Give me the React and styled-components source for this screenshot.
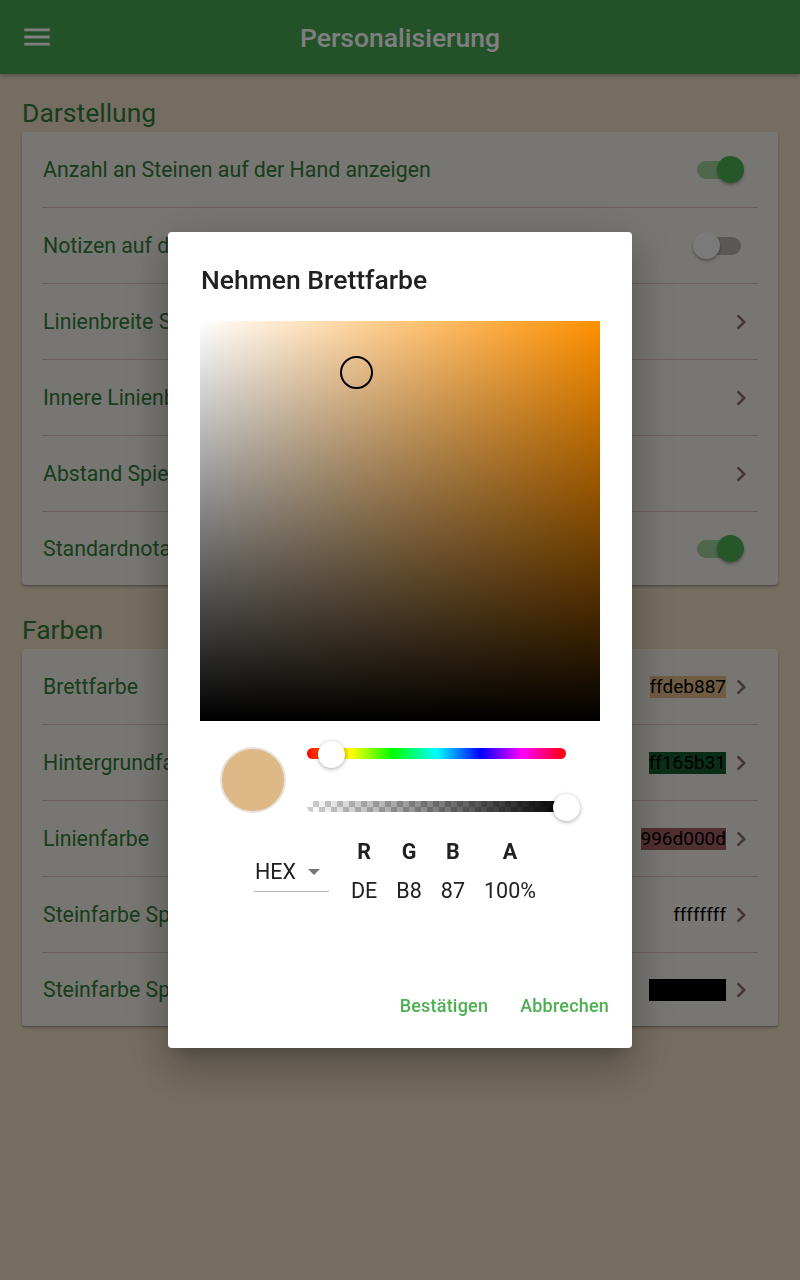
import styled, { createGlobalStyle } from "styled-components";

const GlobalStyle = createGlobalStyle`
  html, body {
    margin: 0;
    padding: 0;
    background: #ecdac2;
    font-family: Roboto, "Liberation Sans", sans-serif;
  }
  * { box-sizing: border-box; }
`;

const Page = styled.div`
  min-height: 1280px;
  background: #ecdac2;
`;

const AppBar = styled.header`
  height: 74px;
  background: #46a250;
  display: flex;
  align-items: center;
  position: relative;
  box-shadow: 0 2px 4px rgba(0, 0, 0, 0.25);
  padding: 0 20px;
`;

const MenuButton = styled.svg`
  width: 34px;
  height: 34px;
  fill: #ffffff;
`;

const AppTitle = styled.h1`
  flex: 1;
  margin: 0 34px 0 0;
  text-align: center;
  font-size: 26.5px;
  font-weight: 500;
  color: #ffffff;
`;

const Content = styled.main`
  padding: 21px 22px 0;
  display: flex;
  flex-direction: column;
  gap: 27px;
`;

const Section = styled.section`
  display: flex;
  flex-direction: column;
  gap: 1px;
`;

const SectionTitle = styled.h2`
  margin: 0;
  height: 36px;
  line-height: 36px;
  font-size: 26.5px;
  font-weight: 400;
  color: #2f7a3a;
`;

const Card = styled.div`
  background: #eeece4;
  border-radius: 4px;
  box-shadow: 0 2px 3px rgba(0, 0, 0, 0.22), 0 1px 1px rgba(0, 0, 0, 0.12);
  padding: 0 20px;
`;

const Row = styled.div`
  height: 76px;
  display: flex;
  align-items: center;
  justify-content: space-between;
  border-bottom: 1px solid #d6bfbd;
  &:last-child { border-bottom: none; height: 73px; }
`;

const RowLabel = styled.span`
  font-size: 21.3px;
  color: #2f7a3a;
  margin-left: 1px;
`;

const Toggle = styled.span`
  position: relative;
  width: 44px;
  height: 18px;
  margin-right: 17px;
  border-radius: 9px;
  background: ${(p) => (p.$on ? "rgba(76, 175, 80, 0.5)" : "#b4b0aa")};
`;

const Thumb = styled.span`
  position: absolute;
  top: -4.5px;
  left: ${(p) => (p.$on ? "20px" : "-4px")};
  width: 27px;
  height: 27px;
  border-radius: 50%;
  background: ${(p) => (p.$on ? "#4caf50" : "#f4f4f4")};
  box-shadow: 0 2px 3px rgba(0, 0, 0, 0.3);
`;

const Trailing = styled.div`
  display: flex;
  align-items: center;
`;

const HexChip = styled.span`
  height: 22px;
  line-height: 22px;
  font-size: 19px;
  color: #000;
  background: ${(p) => p.$bg};
`;

const Chevron = styled.svg`
  width: 30px;
  height: 30px;
  margin-right: 2px;
  fill: #8c6b6b;
`;

const Overlay = styled.div`
  position: fixed;
  inset: 0;
  background: rgba(0, 0, 0, 0.5);
  display: flex;
  align-items: center;
  justify-content: center;
`;

const Dialog = styled.div`
  width: 464px;
  height: 816px;
  background: #fff;
  border-radius: 4px;
  padding: 32px 15px 0 32px;
  display: flex;
  flex-direction: column;
  box-shadow: 0 24px 38px 3px rgba(0, 0, 0, 0.14), 0 9px 46px 8px rgba(0, 0, 0, 0.12),
    0 11px 15px -7px rgba(0, 0, 0, 0.2);
`;

const DialogTitle = styled.h3`
  margin: 0 0 25px 1px;
  font-size: 26.5px;
  line-height: 32px;
  font-weight: 500;
  color: #212121;
`;

const Saturation = styled.div`
  position: relative;
  width: 400px;
  height: 400px;
  background: linear-gradient(to top, #000, rgba(0, 0, 0, 0)),
    linear-gradient(to right, #fff, rgba(255, 255, 255, 0)), #ff9000;
`;

const Pointer = styled.span`
  position: absolute;
  left: 140px;
  top: 35px;
  width: 33px;
  height: 33px;
  border: 2px solid #000;
  border-radius: 50%;
`;

const Controls = styled.div`
  display: flex;
  align-items: flex-start;
  gap: 21px;
  padding: 26px 0 0 20px;
  width: 400px;
`;

const Preview = styled.span`
  width: 66px;
  height: 66px;
  border-radius: 50%;
  background: #deb887;
  border: 2px solid #e6e2dc;
  flex-shrink: 0;
`;

const Sliders = styled.div`
  width: 259px;
  margin-top: 1px;
  display: flex;
  flex-direction: column;
  gap: 42px;
`;

const Track = styled.div`
  position: relative;
  height: 11px;
  border-radius: 6px;
  background: ${(p) => p.$bg};
`;

const Knob = styled.span`
  position: absolute;
  top: 50%;
  left: ${(p) => p.$pos};
  width: 27px;
  height: 27px;
  margin: -13px 0 0 -13px;
  border-radius: 50%;
  background: #fff;
  box-shadow: 0 1px 4px rgba(0, 0, 0, 0.35);
`;

const Fields = styled.div`
  display: flex;
  align-items: flex-start;
  padding: 26px 0 0 54px;
`;

const ModeSelect = styled.div`
  width: 75px;
  height: 40px;
  margin-top: 13px;
  margin-right: 22px;
  border-bottom: 1px solid #b8b8b8;
  display: flex;
  align-items: center;
  justify-content: space-between;
  padding: 0 9px 0 1px;
  font-size: 21.5px;
  color: #212121;
`;

const Caret = styled.span`
  width: 0;
  height: 0;
  border-left: 6px solid transparent;
  border-right: 6px solid transparent;
  border-top: 6px solid #757575;
`;

const ChannelList = styled.div`
  display: flex;
  gap: 19px;
`;

const Channel = styled.div`
  display: flex;
  flex-direction: column;
  align-items: center;
  gap: 14px;
  font-size: 21.5px;
  line-height: 25px;
  color: #212121;
`;

const ChannelLabel = styled.span`
  font-weight: 700;
`;

const Actions = styled.div`
  margin-top: auto;
  display: flex;
  justify-content: flex-end;
  gap: 16px;
  padding-bottom: 24px;
`;

const ActionButton = styled.button`
  border: none;
  background: none;
  padding: 8px;
  font-family: inherit;
  font-size: 18px;
  font-weight: 500;
  color: #4caf50;
  letter-spacing: 0.2px;
`;

const chevronPath = "M10 6 8.59 7.41 13.17 12l-4.58 4.59L10 18l6-6z";

function ChevronIcon() {
  return (
    <Chevron viewBox="0 0 24 24">
      <path d={chevronPath} />
    </Chevron>
  );
}

const display = [
  { label: "Anzahl an Steinen auf der Hand anzeigen", type: "toggle", on: true },
  { label: "Notizen auf dem Spielbrett anzeigen", type: "toggle", on: false },
  { label: "Linienbreite Spielbrett", type: "nav" },
  { label: "Innere Linienbreite Spielbrett", type: "nav" },
  { label: "Abstand Spielbrett", type: "nav" },
  { label: "Standardnotation verwenden", type: "toggle", on: true },
];

const colors = [
  { label: "Brettfarbe", hex: "ffdeb887", bg: "#deb887" },
  { label: "Hintergrundfarbe", hex: "ff165b31", bg: "#165b31" },
  { label: "Linienfarbe", hex: "996d000d", bg: "rgba(109, 0, 13, 0.6)" },
  { label: "Steinfarbe Spieler 1", hex: "ffffffff", bg: "rgba(255, 255, 255, 0.15)" },
  { label: "Steinfarbe Spieler 2", hex: "ff000000", bg: "#000000" },
];

const hueGradient =
  "linear-gradient(to right, #f00 0%, #ff0 17%, #0f0 33%, #0ff 50%, #00f 67%, #f0f 83%, #f00 100%)";
const alphaGradient =
  "linear-gradient(to right, rgba(0,0,0,0), #000), repeating-conic-gradient(#cfcfcf 0% 25%, #ffffff 0% 50%) 0 0 / 12px 12px";

export default function App() {
  return (
    <Page>
      <GlobalStyle />
      <AppBar>
        <MenuButton viewBox="0 0 24 24">
          <path d="M3 18h18v-2H3v2zm0-5h18v-2H3v2zm0-7v2h18V6H3z" />
        </MenuButton>
        <AppTitle>Personalisierung</AppTitle>
      </AppBar>
      <Content>
        <Section>
          <SectionTitle>Darstellung</SectionTitle>
          <Card>
            {display.map((item) => (
              <Row key={item.label}>
                <RowLabel>{item.label}</RowLabel>
                {item.type === "toggle" ? (
                  <Toggle $on={item.on}>
                    <Thumb $on={item.on} />
                  </Toggle>
                ) : (
                  <ChevronIcon />
                )}
              </Row>
            ))}
          </Card>
        </Section>
        <Section>
          <SectionTitle>Farben</SectionTitle>
          <Card>
            {colors.map((item) => (
              <Row key={item.label}>
                <RowLabel>{item.label}</RowLabel>
                <Trailing>
                  <HexChip $bg={item.bg}>{item.hex}</HexChip>
                  <ChevronIcon />
                </Trailing>
              </Row>
            ))}
          </Card>
        </Section>
      </Content>

      <Overlay>
        <Dialog>
          <DialogTitle>Nehmen Brettfarbe</DialogTitle>
          <Saturation>
            <Pointer />
          </Saturation>
          <Controls>
            <Preview />
            <Sliders>
              <Track $bg={hueGradient}>
                <Knob $pos="9.4%" />
              </Track>
              <Track $bg={alphaGradient}>
                <Knob $pos="100%" />
              </Track>
            </Sliders>
          </Controls>
          <Fields>
            <ModeSelect>
              HEX
              <Caret />
            </ModeSelect>
            <ChannelList>
              {[
                ["R", "DE"],
                ["G", "B8"],
                ["B", "87"],
                ["A", "100%"],
              ].map(([k, v]) => (
                <Channel key={k}>
                  <ChannelLabel>{k}</ChannelLabel>
                  <span>{v}</span>
                </Channel>
              ))}
            </ChannelList>
          </Fields>
          <Actions>
            <ActionButton>Bestätigen</ActionButton>
            <ActionButton>Abbrechen</ActionButton>
          </Actions>
        </Dialog>
      </Overlay>
    </Page>
  );
}
